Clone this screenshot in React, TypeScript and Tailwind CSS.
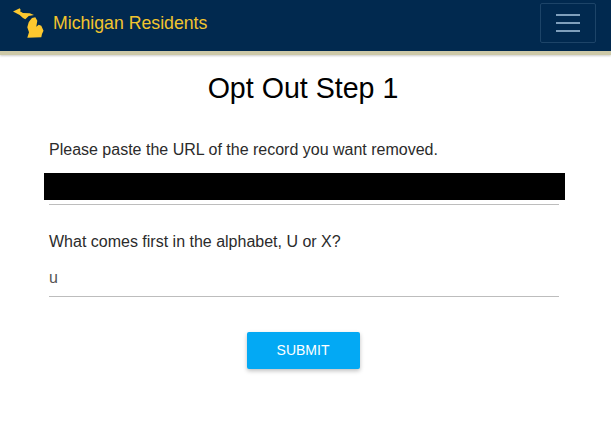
import React from "react";

const MichiganIcon = () => (
  <svg width="32" height="30" viewBox="0 0 32 30" className="block">
    {/* upper peninsula */}
    <path d="M1 3.5 L7.7 0.3 L8.7 2 L8 3.3 L11 5 L17.7 5.3 L22 7 L16.7 8 L13.3 11.3 L11 10 L7.7 7 Z" fill="#fdc82f" />
    {/* lower peninsula */}
    <path d="M20 10 L23.3 9.3 L25.3 12.7 L24.3 18.7 L26.7 16.7 L29.3 17.7 L31.5 22.7 L30 26 L29.3 29.3 L15.3 29.7 L17 24.3 L15.3 19.3 L16.7 14.3 L18.3 12 Z" fill="#fdc82f" />
  </svg>
);

export default function App() {
  return (
    <div className="min-h-[427px] bg-white font-['Liberation_Sans',Arial,sans-serif] text-[#2b2b2b]">
      <nav className="flex h-[55px] items-center justify-between border-b-4 border-[#cdc9a8] bg-[#01294f] pr-[15px] pb-[5px] pl-3 shadow-[0_1px_2px_rgba(0,0,0,0.2)]">
        <div className="flex items-center gap-[9px]">
          <MichiganIcon />
          <span className="text-[17.7px] text-[#f2c42e]">Michigan Residents</span>
        </div>
        <button className="flex h-[40px] w-[56px] flex-col items-center justify-center gap-[6px] rounded-[2px] border border-[#1d4468]">
          <span className="h-[2px] w-[24px] bg-[#7f9fbc]" />
          <span className="h-[2px] w-[24px] bg-[#7f9fbc]" />
          <span className="h-[2px] w-[24px] bg-[#7f9fbc]" />
        </button>
      </nav>
      <main className="pr-[52px] pl-[49px]">
        <h1 className="mt-[15px] pr-[2px] text-center text-[28.6px] leading-[36px] text-black">Opt Out Step 1</h1>
        <p className="mt-[33px] text-[16px] leading-[22px]">Please paste the URL of the record you want removed.</p>
        <div className="mt-[12px] border-b border-[#bdbdbd] pb-[4px]">
          <div className="-mr-[6px] -ml-[5px] h-[27px] bg-black" />
        </div>
        <p className="mt-[26px] text-[16px] leading-[22px]">What comes first in the alphabet, U or X?</p>
        <div className="mt-[14px] h-[30px] border-b border-[#bdbdbd] text-[16px] leading-[22px] text-[#555]">u</div>
        <div className="mt-[35px] flex justify-center pr-[2px]">
          <button className="h-[37px] w-[113px] rounded-[2px] bg-[#03a9f4] text-[14px] text-white shadow-[0_2px_4px_rgba(0,0,0,0.25)]">
            SUBMIT
          </button>
        </div>
      </main>
    </div>
  );
}
